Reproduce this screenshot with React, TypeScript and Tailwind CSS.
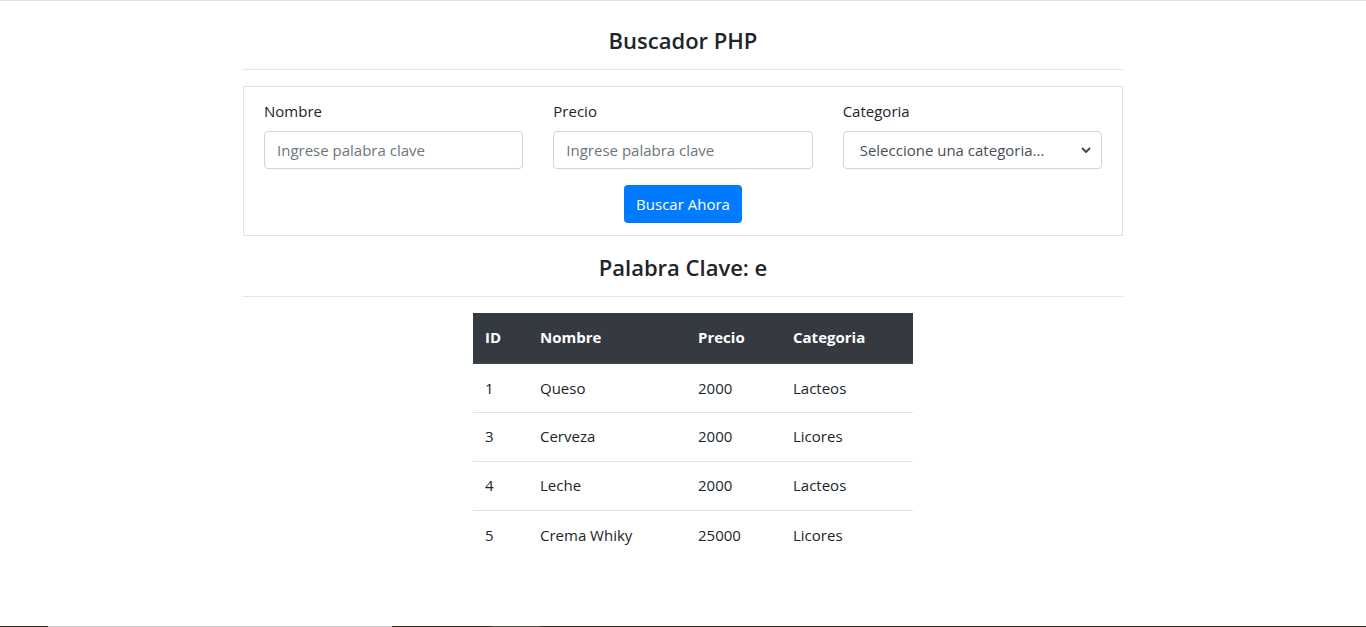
import React from "react";

const rows = [
  { id: "1", nombre: "Queso", precio: "2000", cat: "Lacteos" },
  { id: "3", nombre: "Cerveza", precio: "2000", cat: "Licores" },
  { id: "4", nombre: "Leche", precio: "2000", cat: "Lacteos" },
  { id: "5", nombre: "Crema Whiky", precio: "25000", cat: "Licores" },
];

export default function App() {
  return (
    <div
      className="h-[627px] flex flex-col bg-white text-[#212529] overflow-hidden"
      style={{ fontFamily: '"Open Sans", "Noto Sans", sans-serif' }}
    >
      <div className="h-px bg-[#dee2e6]" />
      <div className="w-[880px] mx-auto">
        <h3 className="mt-[25px] h-[29px] leading-[29px] text-center text-[22px] font-semibold">
          Buscador PHP
        </h3>
        <div className="mt-[14px] h-px bg-[#e5e5e5]" />
        <div className="mt-[16px] border border-[#dee2e6] px-[20px] pt-[12px] pb-[12px]">
          <div className="grid grid-cols-3 gap-x-[30px]">
            <div>
              <label className="block h-[24px] leading-[24px] text-[15px] mb-[8px]">Nombre</label>
              <input
                className="w-full h-[38px] border border-[#ced4da] rounded-[4px] px-[12px] text-[15px] placeholder:text-[#6c757d] outline-none"
                placeholder="Ingrese palabra clave"
              />
            </div>
            <div>
              <label className="block h-[24px] leading-[24px] text-[15px] mb-[8px]">Precio</label>
              <input
                className="w-full h-[38px] border border-[#ced4da] rounded-[4px] px-[12px] text-[15px] placeholder:text-[#6c757d] outline-none"
                placeholder="Ingrese palabra clave"
              />
            </div>
            <div>
              <label className="block h-[24px] leading-[24px] text-[15px] mb-[8px]">Categoria</label>
              <div className="w-full h-[38px] border border-[#ced4da] rounded-[4px] pl-[16px] pr-[10px] flex items-center justify-between text-[15px] text-[#495057]">
                <span>Seleccione una categoria...</span>
                <svg width="10" height="7" viewBox="0 0 10 7" fill="none">
                  <path d="M1.5 1.5 L5 5 L8.5 1.5" stroke="#444" strokeWidth="1.8" strokeLinecap="round" strokeLinejoin="round" />
                </svg>
              </div>
            </div>
          </div>
          <div className="mt-[16px] flex justify-center">
            <button className="h-[38px] px-[12px] rounded-[4px] bg-[#007bff] text-white text-[15px] leading-[24px]">
              Buscar Ahora
            </button>
          </div>
        </div>
        <h3 className="mt-[17px] h-[29px] leading-[29px] text-center text-[22px] font-semibold">
          Palabra Clave: e
        </h3>
        <div className="mt-[14px] h-px bg-[#e5e5e5]" />
        <table className="mt-[16px] ml-[230px] w-[440px] table-fixed border-collapse text-[15px]">
          <colgroup>
            <col className="w-[55px]" />
            <col className="w-[158px]" />
            <col className="w-[95px]" />
            <col className="w-[132px]" />
          </colgroup>
          <thead>
            <tr className="bg-[#343a40] text-white">
              <th className="text-left font-bold h-[50px] px-[12px] border-b-2 border-[#3d434a]">ID</th>
              <th className="text-left font-bold px-[12px] border-b-2 border-[#3d434a]">Nombre</th>
              <th className="text-left font-bold px-[12px] border-b-2 border-[#3d434a]">Precio</th>
              <th className="text-left font-bold px-[12px] border-b-2 border-[#3d434a]">Categoria</th>
            </tr>
          </thead>
          <tbody>
            {rows.map((r, i) => (
              <tr key={r.id} className={i > 0 ? "border-t border-[#dee2e6]" : ""}>
                <td className="h-[49px] px-[12px]">{r.id}</td>
                <td className="px-[12px]">{r.nombre}</td>
                <td className="px-[12px]">{r.precio}</td>
                <td className="px-[12px]">{r.cat}</td>
              </tr>
            ))}
          </tbody>
        </table>
      </div>
      <div className="mt-auto h-px flex">
        <div className="w-[48px] bg-[#2f2b22]" />
        <div className="w-[344px] bg-[#c8c8c8]" />
        <div className="w-[100px] bg-[#2f2b22]" />
        <div className="w-[48px] bg-[#4a4a40]" />
        <div className="flex-1 bg-[#2f2b22]" />
      </div>
    </div>
  );
}
